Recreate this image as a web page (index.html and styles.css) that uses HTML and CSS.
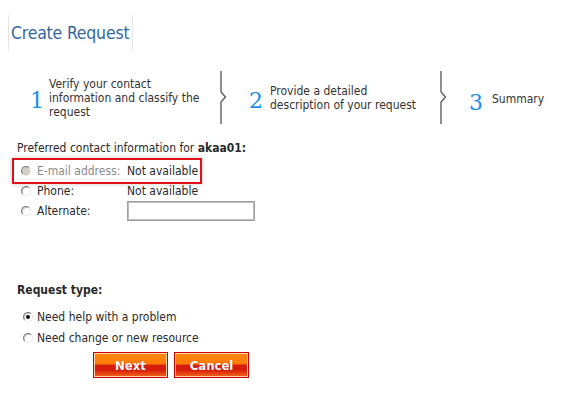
FILE: index.html
```html
<!DOCTYPE html>
<html>
<head>
<meta charset="utf-8">
<link rel="stylesheet" href="styles.css">
</head>
<body>
<div class="page">
  <div class="header"><h1 class="title">Create Request</h1></div>

  <div class="steps">
    <div class="step step1">
      <span class="num">1</span>
      <span class="stext">Verify your contact<br>information and classify the<br>request</span>
    </div>
    <svg class="divider" width="7" height="53" viewBox="0 0 7 53"><path d="M1 0 V21 L5.5 26 L1 31 V53" fill="none" stroke="#555" stroke-width="1.3"/></svg>
    <div class="step step2">
      <span class="num">2</span>
      <span class="stext">Provide a detailed<br>description of your request</span>
    </div>
    <svg class="divider" width="7" height="53" viewBox="0 0 7 53"><path d="M1 0 V21 L5.5 26 L1 31 V53" fill="none" stroke="#555" stroke-width="1.3"/></svg>
    <div class="step step3">
      <span class="num">3</span>
      <span class="stext top">Summary</span>
    </div>
  </div>

  <div class="contact">
    <p class="label">Preferred contact information for <b>akaa01:</b></p>
    <div class="rows">
      <div class="row highlight">
        <span class="radio disabled"></span>
        <span class="rlabel grey">E-mail address:</span>
        <span class="value">Not available</span>
      </div>
      <div class="row phone">
        <span class="radio"></span>
        <span class="rlabel">Phone:</span>
        <span class="value">Not available</span>
      </div>
      <div class="row alt">
        <span class="radio"></span>
        <span class="rlabel">Alternate:</span>
        <span class="field"></span>
      </div>
    </div>
  </div>

  <div class="type">
    <p class="tlabel">Request type:</p>
    <div class="trow"><span class="radio checked"></span><span>Need help with a problem</span></div>
    <div class="trow"><span class="radio"></span><span>Need change or new resource</span></div>
    <div class="buttons">
      <button class="btn">Next</button>
      <button class="btn">Cancel</button>
    </div>
  </div>
</div>
</body>
</html>
```

FILE: styles.css
```css
* { box-sizing: border-box; }
html, body { margin: 0; padding: 0; background: #fff; }
body {
  font-family: "DejaVu Sans Condensed", "DejaVu Sans", sans-serif;
  font-size: 12px;
  color: #2a2a2a;
  width: 576px;
  height: 406px;
  overflow: hidden;
}
.page { padding-top: 15px; }

.header {
  margin-left: 8px;
  width: 125px;
  height: 36px;
  border-left: 1px solid #e6e6e6;
  border-right: 1px solid #e6e6e6;
  display: flex;
  align-items: center;
}
.title {
  margin: 0 0 0 2px;
  font-weight: normal;
  font-size: 17.5px;
  color: #35679e;
  letter-spacing: -0.2px;
}

.steps {
  margin-top: 20px;
  display: flex;
  height: 53px;
}
.step { display: flex; align-items: center; }
.step1 { width: 220px; padding-left: 30px; }
.step2 { width: 213px; padding-left: 22px; }
.step3 { padding-left: 22px; align-items: flex-start; padding-top: 20px; }
.divider { display: block; flex: none; }
.num {
  font-family: "DejaVu Serif", "Liberation Serif", serif;
  font-size: 22px;
  line-height: 24px;
  color: #1a8ef0;
  padding-top: 7px;
  width: 19px;
  flex: none;
}
.step2 .num { width: 21px; }
.step3 .num { padding-top: 0; width: 23px; }
.stext { line-height: 14px; color: #333; }
.stext.top { padding-top: 1px; }

.contact { padding-left: 17px; margin-top: 17px; }
.label { margin: 0; line-height: 14px; }
.label b { font-weight: bold; }
.rows { margin-top: 3px; }
.row {
  display: flex;
  align-items: center;
  margin-left: -5px;
  padding-left: 9px;
  width: 190px;
}
.highlight {
  border: 2px solid #e0101a;
  height: 26px;
  box-shadow: 0 0 4px 1px rgba(0,0,0,0.15);
  padding-left: 7px;
}
.phone { height: 14px; }
.alt { height: 26px; }
.rlabel { width: 96px; padding-left: 6px; flex: none; }
.grey { color: #8a8a8a; }
.value { white-space: nowrap; }
.field {
  width: 128px;
  height: 20px;
  border: 1px solid #a0a0a0;
  box-shadow: inset 0 0 0 1px #bcbcbc;
  background: #fff;
  flex: none;
}

.radio {
  width: 10px;
  height: 10px;
  border-radius: 50%;
  border: 1px solid;
  border-color: #7a7a7a #e8e8e8 #e8e8e8 #7a7a7a;
  background: #fff;
  box-shadow: inset 1px 1px 0 #c8c8c8;
  flex: none;
  position: relative;
}
.radio.disabled { background: #d4d0c8; }
.radio.checked::after {
  content: "";
  position: absolute;
  left: 2px; top: 2px;
  width: 4px; height: 4px;
  border-radius: 50%;
  background: #111;
}

.type { padding-left: 17px; margin-top: 59px; }
.tlabel { margin: 0 0 9px 0; font-weight: bold; line-height: 14px; }
.trow {
  display: flex;
  align-items: center;
  gap: 4px;
  height: 21px;
  padding-left: 6px;
}
.buttons {
  display: flex;
  gap: 6px;
  margin-left: 76px;
  margin-top: 4px;
}
.btn {
  width: 75px;
  height: 26px;
  border: 1px solid #c80000;
  box-shadow: inset 0 0 0 1px #ffd0b0;
  background: linear-gradient(to bottom, #ff8a10 0%, #ff7a05 46%, #d42010 50%, #d81a0a 70%, #f06a18 100%);
  color: #fff;
  font-family: "DejaVu Sans Condensed", "DejaVu Sans", sans-serif;
  font-weight: bold;
  font-size: 13px;
  padding: 0;
  text-shadow: 0 0 1px rgba(120,0,0,0.5);
}
```
